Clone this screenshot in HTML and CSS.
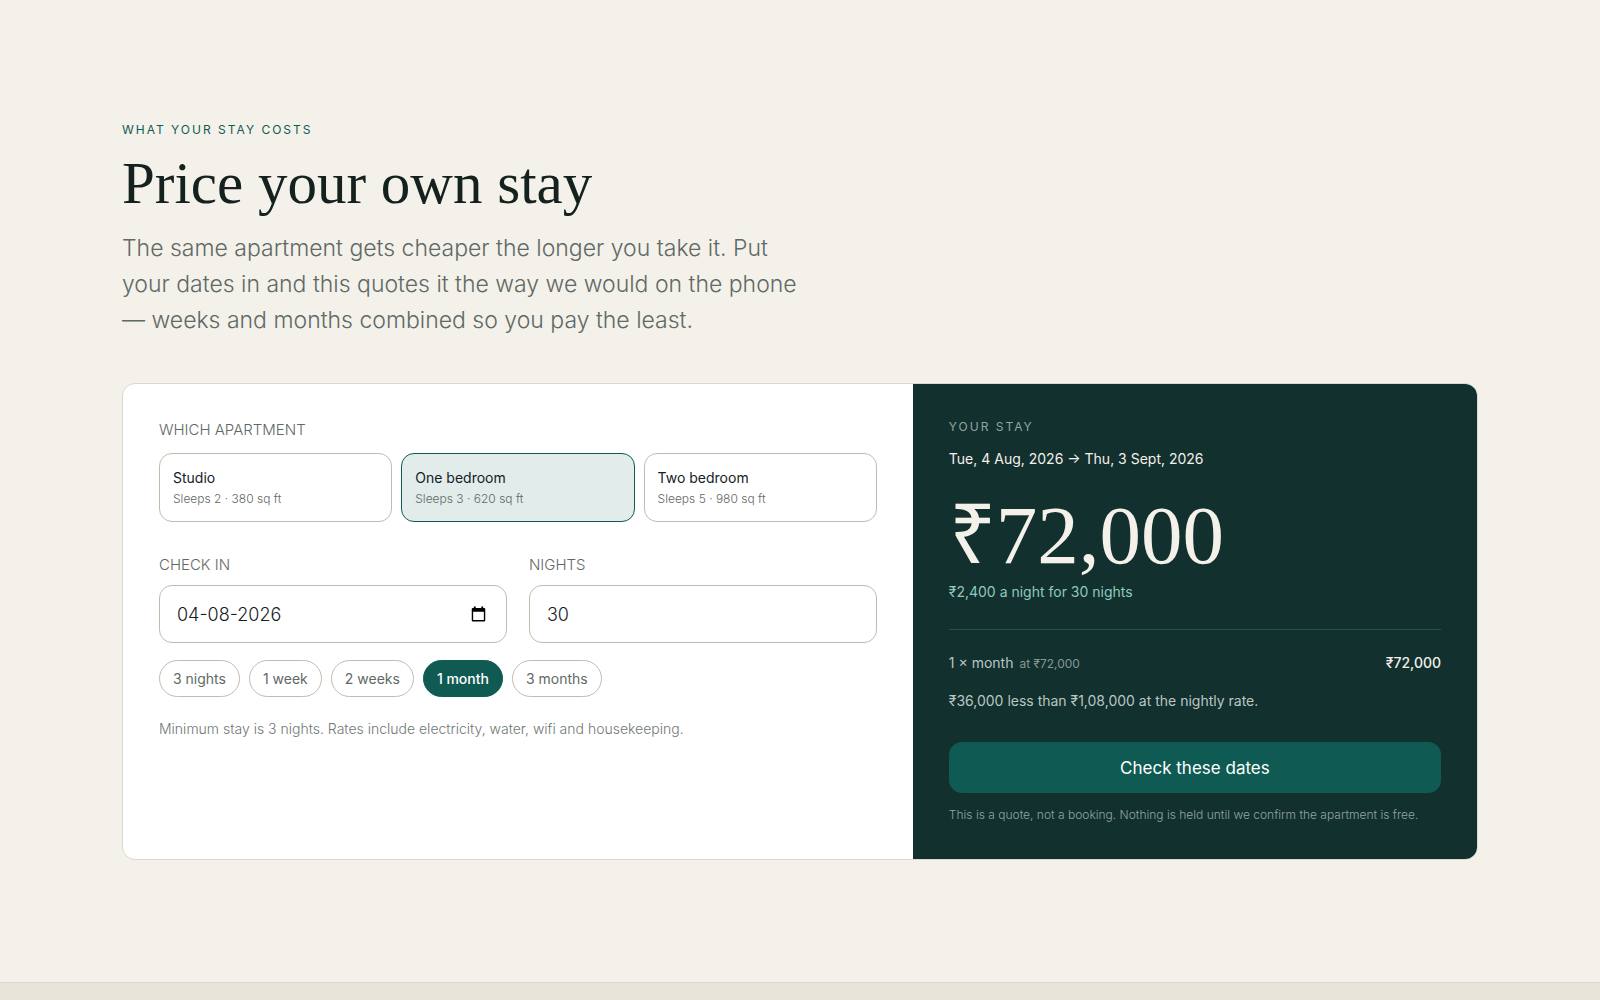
FILE: index.html
```
<!DOCTYPE html>
<html lang="en">

<head>
    <meta charset="utf-8">
    <meta name="viewport" content="width=device-width, initial-scale=1">
    <title>Price your own stay</title>
    <link rel="stylesheet" href="styles.css">
</head>

<body>
    <section class="pricing">
        <div class="pricing-head">
            <p class="eyebrow">What your stay costs</p>
            <h2 class="pricing-title">Price your own stay</h2>
            <p class="pricing-lead">The same apartment gets cheaper the longer you take it. Put your dates in and this quotes it the way we would on the phone — weeks and months combined so you pay the least.</p>
        </div>

        <div class="quote">
            <form class="quote-form" id="quote-form">
                <div class="label" id="apartment-label">Which apartment</div>
                <div class="apartments" role="group" aria-labelledby="apartment-label">
                    <button type="button" class="apartment" aria-pressed="false">
                        <span class="apartment-name">Studio</span>
                        <span class="apartment-meta">Sleeps 2 · 380 sq ft</span>
                    </button>
                    <button type="button" class="apartment is-active" aria-pressed="true">
                        <span class="apartment-name">One bedroom</span>
                        <span class="apartment-meta">Sleeps 3 · 620 sq ft</span>
                    </button>
                    <button type="button" class="apartment" aria-pressed="false">
                        <span class="apartment-name">Two bedroom</span>
                        <span class="apartment-meta">Sleeps 5 · 980 sq ft</span>
                    </button>
                </div>

                <div class="fields">
                    <div class="field">
                        <label class="label" for="checkin">Check in</label>
                        <div class="input-box">
                            <input class="input" id="checkin" type="text" value="04-08-2026">
                            <svg class="input-icon" viewBox="0 0 16 16" aria-hidden="true">
                                <path fill="#000" fill-rule="evenodd" d="M3 0h2v1.5h6V0h2v1.5h1A1.2 1.2 0 0 1 15.200 2.700V14.800A1.200 1.200 0 0 1 14 16H2A1.200 1.200 0 0 1 .8 14.800V2.700A1.200 1.200 0 0 1 2 1.500h1zM2.300 5.500v9h11.400v-9z"/>
                            </svg>
                        </div>
                    </div>
                    <div class="field">
                        <label class="label" for="nights">Nights</label>
                        <div class="input-box">
                            <input class="input" id="nights" type="text" inputmode="numeric" value="30">
                        </div>
                    </div>
                </div>

                <div class="chips">
                    <button type="button" class="chip">3 nights</button>
                    <button type="button" class="chip">1 week</button>
                    <button type="button" class="chip">2 weeks</button>
                    <button type="button" class="chip is-active">1 month</button>
                    <button type="button" class="chip">3 months</button>
                </div>

                <p class="form-note">Minimum stay is 3 nights. Rates include electricity, water, wifi and housekeeping.</p>
            </form>

            <div class="summary">
                <p class="summary-label">Your stay</p>
                <p class="summary-dates">Tue, 4 Aug, 2026 → Thu, 3 Sept, 2026</p>
                <p class="summary-total">₹72,000</p>
                <p class="summary-rate">₹2,400 a night for 30 nights</p>
                <div class="summary-line">
                    <span>1 × month <small class="summary-at">at ₹72,000</small></span>
                    <span class="summary-amount">₹72,000</span>
                </div>
                <p class="summary-saving">₹36,000 less than ₹1,08,000 at the nightly rate.</p>
                <button type="submit" form="quote-form" class="summary-button">Check these dates</button>
                <p class="summary-note">This is a quote, not a booking. Nothing is held until we confirm the apartment is free.</p>
            </div>
        </div>
    </section>

    <section class="next-section"></section>
</body>

</html>
```
FILE: styles.css
```
* {
    box-sizing: border-box;
}

body {
    margin: 0;
    min-height: 100vh;
    display: flex;
    flex-direction: column;
    background: #f4f1ea;
    color: #14211f;
    font-family: Inter, "Liberation Sans", sans-serif;
    font-size: 14px;
    font-weight: 400;
}

p,
h2 {
    margin: 0;
}

button,
input {
    font: inherit;
    color: inherit;
}

button {
    cursor: pointer;
}

.pricing {
    padding: 120px 122px 122px;
}

.eyebrow {
    color: #0f5b54;
    font-size: 12px;
    line-height: 20px;
    letter-spacing: 2px;
    text-transform: uppercase;
}

.pricing-title {
    margin: 12px 0 16px;
    font-family: "Liberation Serif", serif;
    font-size: 59px;
    font-weight: 400;
    line-height: 62px;
}

.pricing-lead {
    max-width: 680px;
    color: #5f6966;
    font-size: 23px;
    font-weight: 300;
    line-height: 36px;
}

.quote {
    display: grid;
    grid-template-columns: 7fr 5fr;
    margin-top: 45px;
    border: 1px solid #dcd8cb;
    border-radius: 13px;
    background: #fff;
    overflow: hidden;
}

.quote-form {
    padding: 36px;
}

.label {
    display: block;
    color: #5f6966;
    font-size: 15px;
    font-weight: 300;
    line-height: 20px;
    text-transform: uppercase;
}

.apartments {
    display: grid;
    grid-template-columns: repeat(3, 1fr);
    gap: 9px;
    margin: 13px 0 33px;
}

.apartment {
    display: flex;
    flex-direction: column;
    padding: 13px;
    border: 1px solid #c3bcae;
    border-radius: 13px;
    background: #fff;
    text-align: left;
}

.apartment.is-active {
    border-color: #0f5b54;
    background: #e2ecea;
}

.apartment-name {
    line-height: 22px;
}

.apartment-meta {
    color: #5f6966;
    font-size: 12px;
    font-weight: 300;
    line-height: 19px;
}

.fields {
    display: grid;
    grid-template-columns: 1fr 1fr;
    gap: 22px;
}

.input-box {
    display: flex;
    align-items: center;
    margin-top: 10px;
    padding: 0 20px 0 17px;
    height: 58px;
    border: 1px solid #c3bcae;
    border-radius: 13px;
}

.input {
    flex: 1;
    min-width: 0;
    padding: 0;
    border: none;
    outline: none;
    background: none;
    font-size: 18px;
    font-weight: 300;
}

.input-icon {
    width: 15px;
    height: 16px;
}

.chips {
    display: flex;
    flex-wrap: wrap;
    gap: 9px;
    margin-top: 17px;
}

.chip {
    padding: 0 13px;
    height: 37px;
    border: 1px solid #c3bcae;
    border-radius: 19px;
    background: #fff;
    color: #5f6966;
}

.chip.is-active {
    border-color: #0f5b54;
    background: #0f5b54;
    color: #fff;
    font-weight: 500;
}

.form-note {
    margin-top: 21px;
    color: #6f7875;
    font-weight: 300;
    line-height: 22px;
}

.summary {
    padding: 36px;
    background: #12302e;
    color: #b9c6c2;
}

.summary-label {
    color: #94a5a1;
    font-size: 12px;
    line-height: 14px;
    letter-spacing: 2px;
    text-transform: uppercase;
}

.summary-dates {
    margin-top: 13px;
    color: #f4f1ea;
    line-height: 24px;
}

.summary-total {
    margin: 22px 0 3px;
    color: #f4f1ea;
    font-family: "Liberation Serif", serif;
    font-size: 83px;
    line-height: 84px;
}

.summary-rate {
    color: #8fcabf;
    line-height: 24px;
}

.summary-line {
    display: flex;
    justify-content: space-between;
    margin: 25px 0 13px;
    padding-top: 21px;
    border-top: 1px solid #1f5650;
    line-height: 24px;
}

.summary-at {
    margin-left: 2px;
    color: #859894;
    font-size: 12px;
}

.summary-amount {
    color: #f4f1ea;
    font-weight: 500;
}

.summary-saving {
    line-height: 24px;
}

.summary-button {
    display: block;
    width: 100%;
    height: 51px;
    margin: 29px 0 14px;
    border: none;
    border-radius: 13px;
    background: #0f5b54;
    color: #fff;
    font-size: 17px;
}

.summary-note {
    color: #93a5a1;
    font-size: 12px;
    font-weight: 300;
    line-height: 16px;
}

.next-section {
    flex: 1;
    border-top: 1px solid #dcd8cb;
    background: #e7e4d9;
}
```
